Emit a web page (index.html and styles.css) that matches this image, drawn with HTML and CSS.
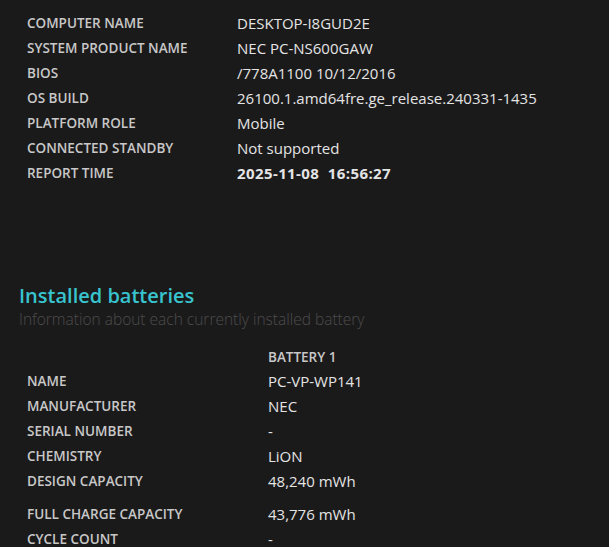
FILE: index.html
```html
<!DOCTYPE html>
<html lang="en">
<head>
    <meta charset="UTF-8">
    <title>Battery report</title>
    <link rel="stylesheet" href="styles.css">
</head>
<body>
    <div class="sysinfo">
        <div class="label">Computer name</div><div class="value">DESKTOP-I8GUD2E</div>
        <div class="label">System product name</div><div class="value">NEC PC-NS600GAW</div>
        <div class="label">BIOS</div><div class="value">/778A1100 10/12/2016</div>
        <div class="label">OS build</div><div class="value">26100.1.amd64fre.ge_release.240331-1435</div>
        <div class="label">Platform role</div><div class="value">Mobile</div>
        <div class="label">Connected standby</div><div class="value">Not supported</div>
        <div class="label">Report time</div><div class="value strong">2025-11-08&nbsp; 16:56:27</div>
    </div>

    <h2>Installed batteries</h2>
    <div class="subtitle">Information about each currently installed battery</div>

    <div class="batteries">
        <div class="label head"></div><div class="colhead">Battery 1</div>
        <div class="label">Name</div><div class="value">PC-VP-WP141</div>
        <div class="label">Manufacturer</div><div class="value">NEC</div>
        <div class="label">Serial number</div><div class="value">-</div>
        <div class="label">Chemistry</div><div class="value">LiON</div>
        <div class="label spaced">Design capacity</div><div class="value spaced">48,240 mWh</div>
        <div class="label">Full charge capacity</div><div class="value">43,776 mWh</div>
        <div class="label">Cycle count</div><div class="value">-</div>
    </div>
</body>
</html>
```
FILE: styles.css
```css
body {
    margin: 0;
    background-color: #1b1a1b;
    font-family: "Open Sans", "Noto Sans", sans-serif;
    color: #e4e4e4;
}
.sysinfo, .batteries {
    display: grid;
    line-height: 25px;
}
.sysinfo {
    grid-template-columns: 210px auto;
    padding: 11px 0 0 27px;
}
.batteries {
    grid-template-columns: 241px auto;
    padding: 16px 0 0 27px;
}
.label {
    font-size: 13.5px;
    font-weight: 600;
    text-transform: uppercase;
    color: #c8c8c8;
}
.value {
    font-size: 15px;
}
.strong {
    font-weight: 700;
    letter-spacing: 0.4px;
}
.colhead, .head {
    line-height: 24px;
}
.colhead {
    font-size: 13.5px;
    font-weight: 600;
    text-transform: uppercase;
    color: #c8c8c8;
}
.spaced {
    padding-bottom: 8px;
}
h2 {
    margin: 96px 0 0 19px;
    font-size: 20px;
    line-height: 28px;
    font-weight: 600;
    color: #38c4ce;
}
.subtitle {
    margin-left: 19px;
    font-size: 15.5px;
    line-height: 19px;
    font-weight: 300;
    color: #4c4c4c;
}
```
